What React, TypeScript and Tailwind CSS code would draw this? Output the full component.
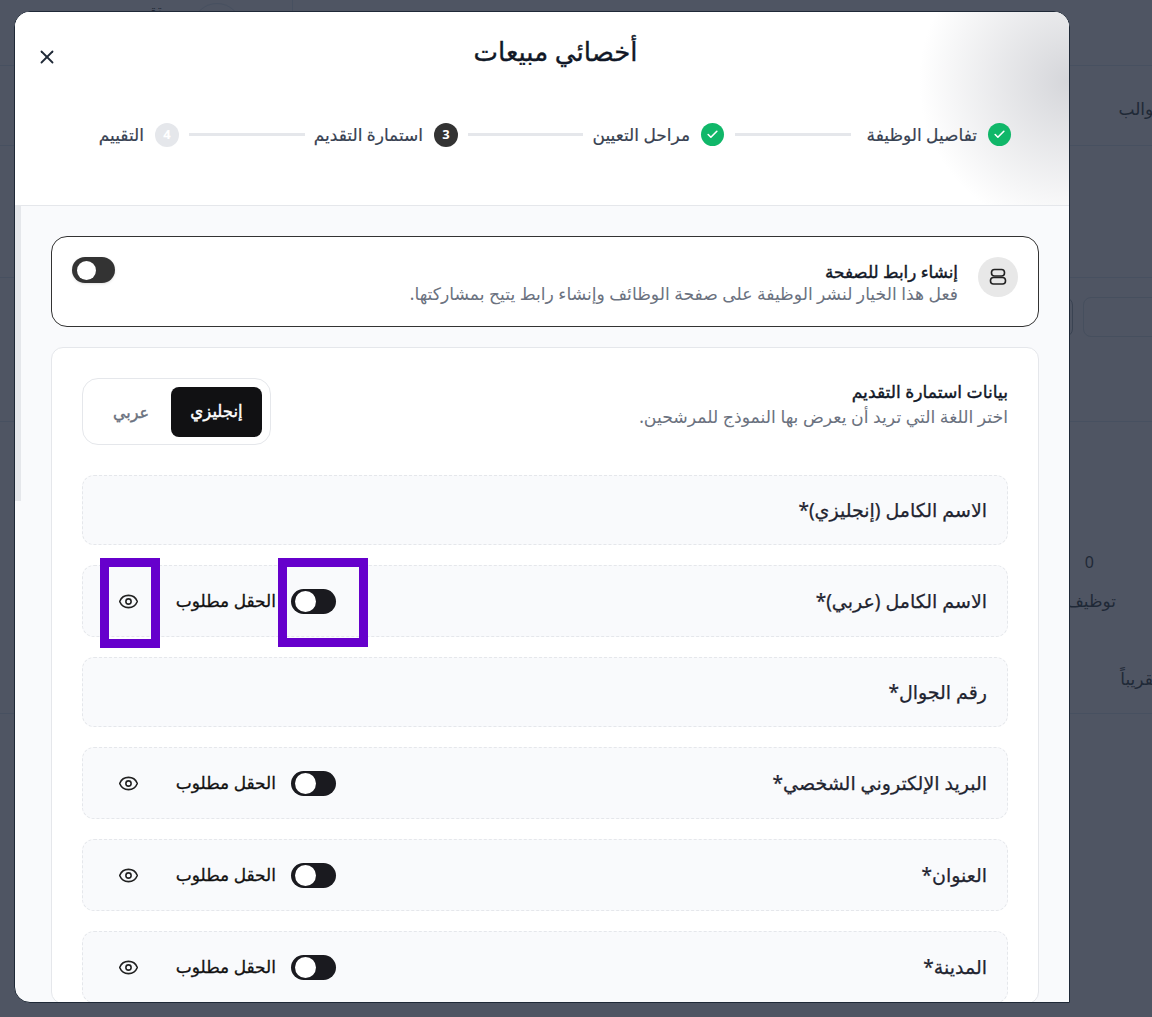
import { Check, Eye, X } from "lucide-react";

const steps = [
  { label: "تفاصيل الوظيفة", state: "done", w: "w-[115px]", line: "" },
  { label: "مراحل التعيين", state: "done", w: "w-[96px]", line: "mx-[11px] w-[116px]" },
  { label: "استمارة التقديم", state: "current", num: "3", w: "w-[108px]", line: "mr-[11px] ml-[10px] w-[115px]" },
  { label: "التقييم", state: "todo", num: "4", w: "w-[47px]", line: "mx-[10px] w-[116px]" },
];

const fields = [
  { label: "الاسم الكامل (إنجليزي)*", controls: false, h: "h-[70px]" },
  { label: "الاسم الكامل (عربي)*", controls: true, h: "h-[72px]", marked: true },
  { label: "رقم الجوال*", controls: false, h: "h-[70px]" },
  { label: "البريد الإلكتروني الشخصي*", controls: true, h: "h-[72px]" },
  { label: "العنوان*", controls: true, h: "h-[72px]" },
  { label: "المدينة*", controls: true, h: "h-[72px]" },
];

function Toggle() {
  return (
    <span className="flex h-[25px] w-[45px] items-center justify-end rounded-full bg-[#1a1a1f] pl-[4px]">
      <span className="h-[21px] w-[21px] rounded-full bg-white" />
    </span>
  );
}

function FieldRow({ label, controls, h, marked }: { label: string; controls: boolean; h: string; marked?: boolean }) {
  return (
    <div className={`relative flex items-center justify-between rounded-xl border border-dashed border-[#e5e7eb] bg-[#f9fafc] pr-[20px] ${h}`}>
      <span className="text-[19px] text-[#1f2430] [-webkit-text-stroke:0.25px_#1f2430]">{label}</span>
      {controls && (
        <div className="ml-[35px] flex items-center">
          <Toggle />
          <span className="mr-[15px] w-[100px] whitespace-nowrap text-[17px] text-[#111] [-webkit-text-stroke:0.3px_#111]">الحقل مطلوب</span>
          <Eye className="mr-[37px] h-[21px] w-[21px] text-[#222]" strokeWidth={1.8} />
        </div>
      )}
      {marked && (
        <>
          <div className="absolute left-[195px] top-[-8px] h-[89px] w-[90px] border-[9px] border-[#6600cc]" />
          <div className="absolute left-[17px] top-[-8px] h-[90px] w-[60px] border-[9px] border-[#6600cc]" />
        </>
      )}
    </div>
  );
}

export default function App() {
  return (
    <div dir="rtl" className="relative h-[1017px] w-[1152px] overflow-hidden bg-[#4f5563] font-['Noto_Sans','DejaVu_Sans',sans-serif]">
      {/* page behind the modal */}
      <div dir="ltr" className="flex h-[66px] border-b border-[#475060] pl-[146px]">
        <span className="h-[20px] w-[46px] text-left text-[14px] leading-[20px] text-[#1f2937]" dir="rtl">تق</span>
        <span className="mt-[3px] h-[50px] w-[50px] rounded-full border border-[#475060]" />
        <span className="ml-[50px] h-[40px] border-l border-[#475060]" />
      </div>
      <div className="-mr-[10px] h-[80px] border-b border-[#475060] pt-[30px] text-[17px] text-[#1f2937]">قوالب</div>
      <div className="h-[132px] border-b border-[#475060]" />
      <div className="flex h-[144px] gap-[10px] border-b border-[#475060] pt-[19px]">
        <div className="-mr-[170px] h-[40px] w-[239px] rounded-lg border border-[#464f5e]" />
        <div className="h-[40px] w-[100px] rounded-lg border border-[#3a4352]" />
      </div>
      <div className="pr-[58px] pt-[128px] text-[16px] text-[#1f2937]">0</div>
      <div className="pr-[36px] pt-[14px] text-[17px] text-[#1f2937]">توظيف</div>
      <div className="-mr-[6px] h-[100px] border-b border-[#475060] pt-[52px] text-[17px] text-[#1f2937]">تقريباً</div>

      {/* modal */}
      <div className="absolute left-[14px] top-[11px] flex h-[992px] w-[1056px] flex-col overflow-hidden rounded-t-2xl rounded-bl-2xl border border-[#1f2937] bg-[#f9fafc]">
        <div className="relative h-[194px] shrink-0 border-b border-[#e5e7eb] bg-white">
          <div className="absolute inset-0 bg-[radial-gradient(circle_150px_at_100%_36%,#d5d6da,#ffffff)]" />
          <div className="relative flex h-[80px] items-center justify-center pb-[2px] pl-[27px] text-[26px] text-[#111827] [-webkit-text-stroke:0.35px_#111827]">أخصائي مبيعات</div>
          <X className="absolute left-[21px] top-[34px] h-[22px] w-[22px] text-[#1f2937]" strokeWidth={2} />
          <div className="relative mt-[30px] flex items-center pr-[58px]">
            {steps.map((s, i) => (
              <div key={s.label} className="flex items-center">
                {i > 0 && <div className={`h-[3px] bg-[#e5e7eb] ${s.line}`} />}
                <div className="flex items-center gap-[11px]">
                  {s.state === "done" && (
                    <span className="flex h-[23px] w-[23px] items-center justify-center rounded-full bg-[#10b769]">
                      <Check className="h-[13px] w-[13px] text-white" strokeWidth={3} />
                    </span>
                  )}
                  {s.state === "current" && (
                    <span className="flex h-[24px] w-[24px] items-center justify-center rounded-full bg-[#333] text-[13px] font-bold text-white">{s.num}</span>
                  )}
                  {s.state === "todo" && (
                    <span className="flex h-[24px] w-[24px] items-center justify-center rounded-full bg-[#e5e7eb] text-[13px] font-bold text-white">{s.num}</span>
                  )}
                  <span className={`whitespace-nowrap text-[17px] text-[#374151] [-webkit-text-stroke:0.2px_#374151] ${s.w}`}>{s.label}</span>
                </div>
              </div>
            ))}
          </div>
        </div>

        <div className="relative flex-1 pl-[36px] pr-[30px] pt-[30px]">
          {/* scrollbar */}
          <div className="absolute left-0 top-0 h-[295px] w-[6px] bg-[#e5e7eb]" />
          <div className="flex h-[91px] items-start justify-between rounded-2xl border border-[#333] bg-white pl-[20px] pr-[20px] pt-[20px]">
            <div className="flex items-start gap-[20px]">
              <span className="flex h-[40px] w-[40px] shrink-0 items-center justify-center rounded-full bg-[#e8e8e8]">
                <svg width="20" height="20" viewBox="0 0 20 20" fill="none" stroke="#222" strokeWidth="1.6">
                  <rect x="3.5" y="2.5" width="13" height="6.5" rx="3" />
                  <rect x="2.5" y="10.5" width="15" height="6.5" rx="3" />
                </svg>
              </span>
              <div className="pt-[4px]">
                <div className="text-[16.8px] leading-[22px] text-[#111827] [-webkit-text-stroke:0.4px_#111827]">إنشاء رابط للصفحة</div>
                <div className="whitespace-nowrap text-[17.2px] leading-[22px] text-[#6b7280]">فعل هذا الخيار لنشر الوظيفة على صفحة الوظائف وإنشاء رابط يتيح بمشاركتها.</div>
              </div>
            </div>
            <span className="flex h-[26px] w-[43px] items-center justify-end rounded-full bg-[#333] pl-[5px] shadow-sm">
              <span className="h-[19px] w-[19px] rounded-full bg-white" />
            </span>
          </div>

          <div className="mt-[20px] rounded-xl border border-[#e5e7eb] bg-white px-[30px] pt-[30px]">
            <div className="flex items-start justify-between">
              <div className="pt-[2px]">
                <div className="text-[17.2px] leading-[24px] text-[#111827] [-webkit-text-stroke:0.4px_#111827]">بيانات استمارة التقديم</div>
                <div className="whitespace-nowrap text-[17.3px] leading-[25px] text-[#6b7280]">اختر اللغة التي تريد أن يعرض بها النموذج للمرشحين.</div>
              </div>
              <div className="flex h-[67px] w-[189px] items-center rounded-2xl border border-[#e5e7eb] p-[8px]">
                <span className="flex h-[50px] w-[91px] items-center justify-center rounded-lg bg-[#111113] text-[16.5px] text-white [-webkit-text-stroke:0.4px_#ffffff]">إنجليزي</span>
                <span className="flex-1 text-center text-[16px] text-[#6b7280] [-webkit-text-stroke:0.4px_#6b7280]">عربي</span>
              </div>
            </div>
            <div className="mt-[30px] flex flex-col gap-[20px]">
              {fields.map((f) => (
                <FieldRow key={f.label} {...f} />
              ))}
            </div>
          </div>
        </div>
      </div>
    </div>
  );
}
